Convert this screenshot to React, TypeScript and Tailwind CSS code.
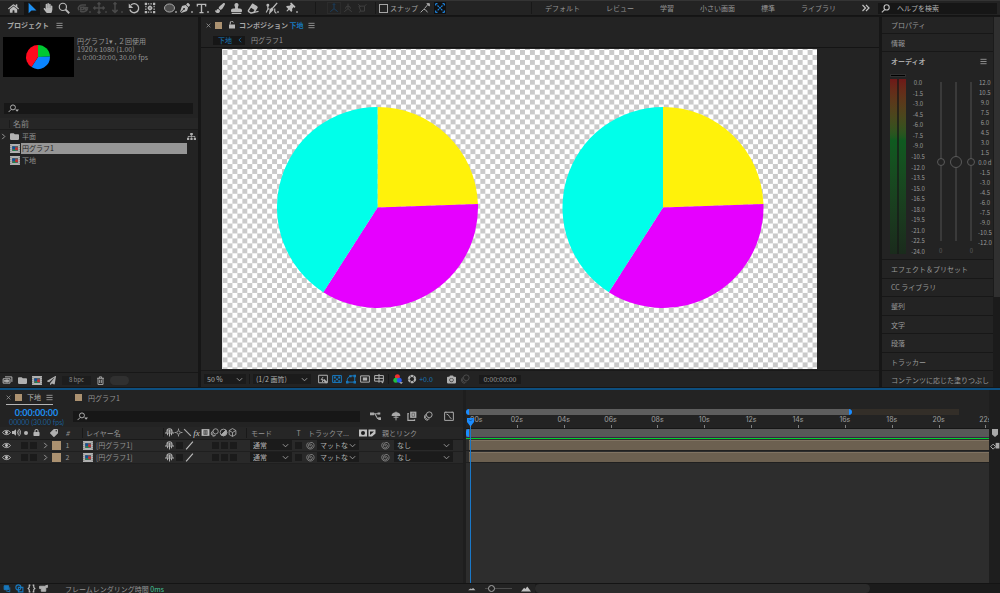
import React from "react";
import {
  FaHome, FaHandPaper, FaPenNib, FaPaintBrush, FaStamp, FaEraser, FaThumbtack,
  FaFolder, FaSitemap, FaLock, FaTag, FaCamera, FaVolumeUp, FaPaperPlane,
} from "react-icons/fa";

type SvgProps = { className?: string; children: React.ReactNode };

/* Stroked 16-unit icon */
function Glyph({ className = "size-3", children }: SvgProps) {
  return (
    <svg viewBox="0 0 16 16" className={`shrink-0 ${className}`} fill="none" stroke="currentColor" strokeWidth="1.6" aria-hidden="true">
      {children}
    </svg>
  );
}

const Chevron = () => (
  <Glyph className="size-[7px] pointer-events-none text-[#9a9a9a]"><path d="M2 5l6 6 6-6" strokeWidth="2.2" /></Glyph>
);
const ChevronRight = () => <Glyph className="size-[7px] text-[#a0a0a0]"><path d="M5 2l6 6-6 6" strokeWidth="2.2" /></Glyph>;
const MenuIcon = () => <Glyph className="size-[7px] text-[#9a9a9a]"><path d="M1 3h14M1 8h14M1 13h14" strokeWidth="2" /></Glyph>;
const CloseIcon = () => <Glyph className="size-[5px] text-[#9a9a9a]"><path d="M2 2l12 12M14 2L2 14" strokeWidth="2.4" /></Glyph>;
const SearchGlyph = () => (
  <Glyph className="size-[9px] text-[#c0c0c0]"><circle cx="10" cy="6" r="4.6" strokeWidth="2" /><path d="M7 9.5L1.5 15" strokeWidth="2" /></Glyph>
);
const SearchMenuGlyph = () => (
  <svg viewBox="0 0 20 16" className="h-[9px] w-[11px] shrink-0 text-[#b0b0b0]" fill="none" stroke="currentColor" strokeWidth="1.8" aria-hidden="true">
    <circle cx="9" cy="6" r="4.5" /><path d="M6 9.5L1 14.5" /><path d="M13 10h7l-3.5 4z" fill="currentColor" stroke="none" />
  </svg>
);
const CompIcon = ({ className = "h-[9px] w-[10px]" }: { className?: string }) => (
  <svg viewBox="0 0 20 18" className={`shrink-0 ${className}`} aria-hidden="true">
    <rect width="20" height="18" fill="#b0b0b0" />
    <path d="M1.500 2v14M18.500 2v14" stroke="#777" strokeWidth="1.500" strokeDasharray="2 2" />
    <rect x="4" y="4" width="12" height="10" fill="#596264" />
    <circle cx="7.500" cy="7.500" r="3" fill="#0f4f9c" /><rect x="10.500" y="7" width="5" height="5" fill="#c92b2b" /><path d="M5.500 14l3-5 3 5z" fill="#1c8a48" />
  </svg>
);
const EyeIcon = () => (
  <Glyph className="size-[9px] text-[#c4c4c4]"><path d="M1 8c3-5 11-5 14 0-3 5-11 5-14 0z" /><circle cx="8" cy="8" r="2.6" fill="currentColor" stroke="none" /></Glyph>
);
const ShyIcon = ({ className = "size-[9px]" }: { className?: string }) => (
  <Glyph className={`${className} text-[#b0b0b0]`}><path d="M3.500 8V5.500a4.500 4 0 0 1 9 0V8M4 5.500h8M8 3v12M0 9h16M4.500 9v4M11.500 9v4" strokeWidth="1.800" /></Glyph>
);
const SpiralIcon = () => (
  <Glyph className="size-[9px] text-[#8d8d8d]"><path d="M8.5 8.5a1.5 1.5 0 1 1 1-2.500 3.500 3.500 0 1 1-5 1.500 5 5 0 0 1 9-3c3 6-2 11-8 9.500A6.600 6.600 0 0 1 4 2.500" strokeWidth="1.400" /></Glyph>
);
const FrameBlend = () => (
  <Glyph className="size-[9px] text-[#b5b5b5]"><rect x="1" y="2" width="14" height="12" fill="currentColor" stroke="none" /><rect x="4.500" y="4" width="7" height="8" fill="#4a4a4a" stroke="none" /><path d="M6 6h4M6 8h4M6 10h4M2.800 3v10M13.200 3v10" stroke="#d0d0d0" strokeWidth="1" strokeDasharray="1.500 1" /></Glyph>
);
const MotionBlur = ({ className = "size-[9px]" }: { className?: string }) => (
  <Glyph className={`${className} text-[#a5a5a5]`}><circle cx="10" cy="6" r="4.600" /><path d="M5.500 4.500a4.600 4.600 0 0 0 5 8M3.500 7a4.600 4.600 0 0 0 4.500 7.500" /></Glyph>
);
const CubeIcon = ({ className = "size-[9px]" }: { className?: string }) => (
  <Glyph className={`${className} text-[#a5a5a5]`}><path d="M8 1l6 3.500v7L8 15l-6-3.500v-7zM2 4.500L8 8l6-3.500M8 8v7" /></Glyph>
);

const CUTS = [0, 88, 212.6, 360];
function Pie({ cx, cy, r, colors }: { cx: number; cy: number; r: number; colors: string[] }) {
  const at = (deg: number) => {
    const a = (deg * Math.PI) / 180;
    return `${(cx + r * Math.sin(a)).toFixed(2)} ${(cy - r * Math.cos(a)).toFixed(2)}`;
  };
  return (
    <g>
      {colors.map((c, i) => (
        <path key={c} fill={c} d={`M${cx} ${cy}L${at(CUTS[i])}A${r} ${r} 0 0 1 ${at(CUTS[i + 1])}Z`} />
      ))}
    </g>
  );
}

function Tool({ label, active, dim, children, menu }: { label: string; active?: boolean; dim?: boolean; menu?: boolean; children: React.ReactNode }) {
  return (
    <button
      type="button"
      aria-label={label}
      className={`relative flex h-[13px] w-4 items-center justify-center ${active ? "bg-[#141414] text-[#1d8ff2]" : dim ? "text-[#4a4a4a]" : "text-[#b9b9b9]"}`}
    >
      {children}
      {menu && <span className="absolute right-0 bottom-0.5 size-0.5 bg-current opacity-60" />}
    </button>
  );
}

const Divider = () => <span className="h-3 w-px shrink-0 bg-[#181818]" />;

function Toolbar() {
  return (
    <header className="flex h-4 shrink-0 items-center border-t border-b border-t-[#343434] border-b-[#141414] bg-[#232323]">
      <div className="flex w-[315px] shrink-0 items-center gap-[3px] pl-[5px]">
        <Tool label="ホーム"><FaHome className="size-[11px]" /></Tool>
        <div className="flex">
          <Tool label="選択ツール" active><Glyph><path d="M3.500 1v14l3.800-3.800H14z" fill="currentColor" stroke="none" /></Glyph></Tool>
          <Tool label="手のひらツール"><FaHandPaper className="size-2.5" /></Tool>
          <Tool label="ズームツール"><Glyph><circle cx="6.500" cy="6.500" r="4.800" /><path d="M10 10l5 5" strokeWidth="2.400" /></Glyph></Tool>
        </div>
        <div className="flex">
          <Tool label="周回ツール" dim menu><Glyph><path d="M3 11C0 8 3 4 7 4h5M4 12c4 2 9 1 10-3M13 12l-3-5 5 1M5 7h4v3H5z" strokeWidth="2" /></Glyph></Tool>
          <Tool label="パンツール" dim menu><Glyph><path d="M8 1v14M1 8h14M6 3l2-2 2 2M6 13l2 2 2-2M3 6L1 8l2 2M13 6l2 2-2 2" strokeWidth="1.800" /></Glyph></Tool>
          <Tool label="ドリーツール" dim menu><Glyph><path d="M8 1v13M4.500 10.500L8 14l3.500-3.500M6 3l2-2 2 2" strokeWidth="2" /></Glyph></Tool>
        </div>
        <div className="flex">
          <Tool label="回転ツール"><Glyph><path d="M4 4a6 6 0 1 1-1.500 6" strokeWidth="1.800" /><path d="M1 2v6h6z" fill="currentColor" stroke="none" /></Glyph></Tool>
          <Tool label="アンカーポイントツール"><Glyph><path d="M1 1h3v3H1zM12 1h3v3h-3zM1 12h3v3H1zM12 12h3v3h-3z" fill="currentColor" stroke="none" /><path d="M5 2.500h6M5 13.500h6M2.500 5v6M13.500 5v6" strokeDasharray="2 1.500" /><circle cx="8" cy="8" r="2.200" /><path d="M8 4.500v7M4.500 8h7" strokeWidth="1" /></Glyph></Tool>
        </div>
        <div className="flex">
          <Tool label="楕円形ツール" menu><Glyph className="h-2.5 w-[13px]"><ellipse cx="8" cy="8" rx="8" ry="6.500" fill="#4d4d4d" strokeWidth="1.400" /></Glyph></Tool>
          <Tool label="ペンツール" menu><FaPenNib className="size-2.5" /></Tool>
          <Tool label="文字ツール" menu><Glyph className="size-[11px]"><path d="M2 5V2h12v3M8 2v12M5 14h6" strokeWidth="2" /></Glyph></Tool>
        </div>
        <div className="flex">
          <Tool label="ブラシツール"><FaPaintBrush className="size-2.5" /></Tool>
          <Tool label="コピースタンプツール"><FaStamp className="size-[11px]" /></Tool>
          <Tool label="消しゴムツール"><FaEraser className="size-[11px] -rotate-12" /></Tool>
        </div>
        <Tool label="ロトブラシツール" menu><Glyph className="size-[13px]"><path d="M15 1L9 8M8 8l1.500 1.500L6 13l.5-3.500z" strokeWidth="1.600" fill="currentColor" /><circle cx="3.500" cy="4" r="1" fill="currentColor" /><path d="M3.500 5v4l-2 4M3.500 8l2 1M12 8v4l2 2" strokeWidth="1.400" /></Glyph></Tool>
        <Tool label="パペットピンツール" menu><FaThumbtack className="size-2.5 rotate-45" /></Tool>
      </div>
      <Divider />
      <div className="flex w-[59px] shrink-0 items-center justify-end pr-1.5 text-[#3f3f3f]">
        <button type="button" aria-label="ローカル軸モード" className="flex h-3 w-3.5 items-center justify-center border border-[#2b2b2b] text-[#1b3f60]"><Glyph className="size-2.5"><path d="M8 1v8M8 9l-6 5M8 9l6 5M6 3l2-2 2 2" /></Glyph></button>
        <button type="button" aria-label="ワールド軸モード" className="flex w-3.5 justify-center"><Glyph className="size-2.5"><path d="M8 1v8M8 9l-6 5M8 9l6 5M4 9a4 4 0 0 1 8 0" /></Glyph></button>
        <button type="button" aria-label="ビュー軸モード" className="flex w-3.5 justify-center"><Glyph className="size-2.5"><path d="M2 2l4 4M3 5h9v8H6zM12 5l3-3M6 13l-3 2" /></Glyph></button>
      </div>
      <Divider />
      <div className="flex shrink-0 items-center pl-[3px] text-[#a5a5a5]">
        <label className="flex items-center gap-0.5">
          <input type="checkbox" className="size-[9px] appearance-none border border-[#a5a5a5] bg-transparent" />
          スナップ
        </label>
        <button type="button" aria-label="スナップ延長" className="flex w-3.5 justify-center"><Glyph className="size-2.5"><path d="M1 15l5-5 3 1 3 4M7 9l6-7" /><path d="M11 1h4v4z" fill="currentColor" /></Glyph></button>
        <button type="button" aria-label="スナップ折りたたみ" className="ml-0.5 flex h-3 w-3 items-center justify-center bg-[#101010] text-[#1d7fd6]"><Glyph className="size-2.5"><path d="M1 1h4M1 1v4M15 1h-4M15 1v4M1 15h4M1 15v-4M15 15h-4M15 15v-4M4 4l8 8M12 4l-8 8" strokeWidth="2" strokeDasharray="3 1" /></Glyph></button>
      </div>
      <div className="flex-1" />
      <Divider />
      <nav className="flex shrink-0 items-center gap-[26px] pl-[13px] text-[#949494]">
        {["デフォルト", "レビュー", "学習", "小さい画面", "標準", "ライブラリ"].map((t) => <button key={t} type="button">{t}</button>)}
        <button type="button" aria-label="その他のワークスペース" className="mr-2 text-[#c0c0c0]"><Glyph className="size-2"><path d="M1 2l6 6-6 6M8 2l6 6-6 6" strokeWidth="2.400" /></Glyph></button>
      </nav>
      <label className="mr-[3px] flex h-[11px] w-[119px] shrink-0 items-center gap-[7px] bg-[#161616] pl-[3px]">
        <SearchGlyph />
        <input aria-label="ヘルプを検索" placeholder="ヘルプを検索" className="w-full min-w-0 bg-transparent outline-none placeholder:text-[#b0b0b0]" />
      </label>
    </header>
  );
}

function ProjectPanel() {
  return (
    <section className="flex w-[198px] shrink-0 flex-col bg-[#232323]">
      <h2 className="flex h-4 items-center gap-[7px] pl-[7px] font-bold text-[#a8a8a8]">プロジェクト <MenuIcon /></h2>
      <div className="flex gap-[3px] pt-1 pl-[3px] text-[#949494]">
        <svg viewBox="0 0 71 40" className="h-10 w-[71px] shrink-0 bg-black" aria-hidden="true">
          <Pie cx={35} cy={20} r={12} colors={["#00c832", "#0a84ff", "#ff0a1e"]} />
        </svg>
        <p className="whitespace-nowrap">円グラフ1▾ , ２回使用<br />1920 x 1080 (1.00)<br />▵ 0:00:30:00, 30.00 fps</p>
      </div>
      <label className="mt-[26px] mr-[5px] ml-1 flex h-[11px] items-center bg-[#171717] pl-1">
        <SearchMenuGlyph />
        <input aria-label="プロジェクトを検索" className="w-full min-w-0 bg-transparent outline-none" />
      </label>
      <div className="mt-1 flex h-3 items-center border-b border-[#1b1b1b] bg-[#262626] pl-[9px] text-[8px] text-[#8d8d8d]"><span className="border-l border-[#1b1b1b] pl-[3px]">名前</span></div>
      <ul className="flex-1 text-[#949494]">
        <li className="flex h-3 items-center">
          <span className="w-2.5"><ChevronRight /></span>
          <FaFolder className="h-[9px] w-[9px] text-[#b5b5b5]" /><span className="ml-[3px] flex-1">平面</span>
          <FaSitemap className="mr-0.5 size-[9px] text-[#b0b0b0]" />
        </li>
        <li className="flex h-3 items-center pl-2.5">
          <CompIcon /><span className="ml-px mr-[11px] flex h-[11px] flex-1 items-center bg-[#969696] pl-px text-[#1e1e1e]">円グラフ1</span>
        </li>
        <li className="flex h-3 items-center pl-2.5"><CompIcon /><span className="ml-0.5">下地</span></li>
      </ul>
      <div className="flex h-[15px] items-center gap-[5px] border-t border-[#171717] pl-[2px] text-[#b0b0b0]">
        <button type="button" aria-label="フッテージを変換"><Glyph className="h-2.5 w-[11px]"><path d="M4 3h11v8M1 6h11v7H1zM3 8v3M10 8v3" /><path d="M5 8h4v3H5z" fill="currentColor" /></Glyph></button>
        <button type="button" aria-label="新規フォルダー"><FaFolder className="size-[9px]" /></button>
        <button type="button" aria-label="新規コンポジション"><CompIcon /></button>
        <button type="button" aria-label="プロジェクト設定"><FaPaperPlane className="size-[9px]" /></button>
        <button type="button" className="ml-[1px] h-[9px] w-[29px] bg-[#1d1d1d] text-[6px] text-[#8d8d8d]">8 bpc</button>
        <button type="button" aria-label="削除"><Glyph className="size-[9px]"><path d="M2 4h12M6 4V1.500h4V4M3.500 4v11h9V4M6.500 6.500v6M9.500 6.500v6" /></Glyph></button>
        <span className="h-[9px] w-[19px] rounded-full bg-[#303030]" />
      </div>
    </section>
  );
}

function Select({ label, options, className }: { label: string; options: string[]; className: string }) {
  return (
    <span className={`flex items-center bg-[#1b1b1b] pr-[3px] ${className}`}>
      <select aria-label={label} className="h-full min-w-0 flex-1 appearance-none bg-transparent pl-[3px] leading-none text-[#b0b0b0] outline-none">
        {options.map((o) => <option key={o}>{o}</option>)}
      </select>
      <Chevron />
    </span>
  );
}

const Swatch = () => <span className="size-[7px] shrink-0 bg-[#ab9170]" />;

function CompositionPanel() {
  return (
    <section className="flex min-w-0 flex-1 flex-col bg-[#232323]">
      <div className="flex h-4 items-center pl-[5px]">
        <CloseIcon />
        <span className="ml-1 flex"><Swatch /></span>
        <Glyph className="ml-1.5 size-2 text-[#b8b8b8]"><path d="M2 7h12v8H2z" fill="currentColor" stroke="none" /><path d="M4.500 7V4a3 3 0 0 1 6-1" strokeWidth="2" /></Glyph>
        <h2 className="mr-1 ml-[3px] font-bold whitespace-nowrap text-[#a8a8a8]">コンポジション <span className="text-[#1878bd]">下地</span></h2>
        <MenuIcon />
      </div>
      <nav className="flex h-[15px] items-center border-b border-[#141414] pl-3">
        <button type="button" className="flex h-[9px] w-8 items-center justify-between bg-[#161616] pr-0.5 pl-[5px] text-[#1878bd]">下地 <Glyph className="size-1.5"><path d="M11 2L5 8l6 6" strokeWidth="2" /></Glyph></button>
        <button type="button" className="ml-1.5 text-[#949494]">円グラフ1</button>
      </nav>
      <div className="flex-1 pt-px pr-[62px] pl-[21px]">
        <svg viewBox="0 0 595 320" className="block w-full" role="img" aria-label="円グラフ">
          <defs>
            <pattern id="checker" width="9.917" height="9.917" patternUnits="userSpaceOnUse" patternTransform="translate(0.500 1)">
              <rect width="9.917" height="9.917" fill="#fff" />
              <path d="M0 0h4.958v4.958H0zM4.958 4.958h4.959v4.959H4.958z" fill="#cacaca" />
            </pattern>
          </defs>
          <rect width="595" height="320" fill="url(#checker)" />
          <Pie cx={155.5} cy={158.5} r={100.5} colors={["#fff20a", "#e600ff", "#00ffea"]} />
          <Pie cx={441} cy={158.5} r={100.5} colors={["#fff20a", "#e600ff", "#00ffea"]} />
        </svg>
      </div>
      <div className="mt-px flex h-[17px] items-center border-t border-[#191919] pl-[3px] text-[#b0b0b0]">
        <Select label="拡大率" options={["50 %"]} className="h-2.5 w-[42px]" />
        <span className="mx-[3px] h-2.5 w-px bg-[#181818]" />
        <Select label="解像度" options={["(1/2 画質)"]} className="h-2.5 w-[58px]" />
        <div className="flex items-center gap-1 pl-[7px]">
          <button type="button" aria-label="高速プレビュー"><Glyph className="size-2.5"><path d="M1 2h14v12H1zM8 5L5 9h3l-1 4" /><path d="M9 9l5 5" strokeWidth="3" /></Glyph></button>
          <button type="button" aria-label="透明グリッド" className="text-[#1878bd]"><Glyph className="size-2.5"><path d="M1 2.500h14v11H1z" /><path d="M3 4h3v3H3zM10 4h3v3h-3zM6.500 7h3v3h-3zM3 10h3v2.500H3zM10 10h3v2.500h-3z" fill="currentColor" stroke="none" /></Glyph></button>
          <button type="button" aria-label="マスクとシェイプのパス" className="text-[#1878bd]"><Glyph className="size-2.5"><path d="M2 13V9c1-4 4-6 6-6h6v10z" /><path d="M0 11h4v4H0zM12 11h4v4h-4zM12 1h4v4h-4zM5 2h4v3H5z" fill="currentColor" stroke="none" /></Glyph></button>
          <button type="button" aria-label="目標範囲"><Glyph className="size-2.5"><path d="M1 3h14v10H1z" /><path d="M4.500 5.500h7v5h-7z" fill="currentColor" stroke="none" /></Glyph></button>
          <button type="button" aria-label="グリッドとガイド"><Glyph className="size-2.5"><path d="M1 2.500h14v9H1zM8 0v14M1 7h14" /><path d="M11 12h5l-2.500 3z" fill="currentColor" stroke="none" /></Glyph></button>
        </div>
        <span className="mx-1 h-2.5 w-px bg-[#181818]" />
        <button type="button" aria-label="チャンネル"><svg viewBox="0 0 16 16" className="size-2.5" aria-hidden="true"><circle cx="7" cy="4.500" r="4" fill="#f03030" /><circle cx="4.500" cy="10" r="4" fill="#20c040" /><circle cx="10" cy="10" r="4" fill="#2a58e8" /><path d="M10 13h6l-3 3z" fill="#c0c0c0" /></svg></button>
        <button type="button" aria-label="露出をリセット" className="ml-1"><Glyph className="size-2.5"><circle cx="8" cy="8" r="5" strokeWidth="3.500" strokeDasharray="4.400 0.800" /></Glyph></button>
        <button type="button" className="w-[18px] text-[#1878bd]">+0.0</button>
        <button type="button" aria-label="スナップショット" className="ml-3"><FaCamera className="size-[9px]" /></button>
        <button type="button" aria-label="最後のスナップショット" className="ml-1 opacity-30"><MotionBlur className="size-2.5" /></button>
        <button type="button" className="ml-[9px] h-[9px] w-[42px] bg-[#1a1a1a] text-[#9a9a9a]">0:00:00:00</button>
      </div>
    </section>
  );
}

const LEFT_DB = ["0.0", "-1.5", "-3.0", "-4.5", "-6.0", "-7.5", "-9.0", "-10.5", "-12.0", "-13.5", "-15.0", "-16.5", "-18.0", "-19.5", "-21.0", "-22.5", "-24.0"];
const RIGHT_DB = ["12.0", "10.5", "9.0", "7.5", "6.0", "4.5", "3.0", "1.5", "0.0 d", "-1.5", "-3.0", "-4.5", "-6.0", "-7.5", "-9.0", "-10.5", "-12.0"];

function LevelSlider({ label, big }: { label: string; big?: boolean }) {
  const thumb = big
    ? "w-3 [&::-webkit-slider-thumb]:-ml-[5px] [&::-webkit-slider-thumb]:size-3"
    : "w-2 [&::-webkit-slider-thumb]:-ml-[3px] [&::-webkit-slider-thumb]:size-2";
  return (
    <input
      type="range"
      aria-label={label}
      defaultValue={50}
      className={`h-[159px] appearance-none bg-transparent [writing-mode:vertical-lr] [&::-webkit-slider-runnable-track]:mx-auto [&::-webkit-slider-runnable-track]:w-0.5 [&::-webkit-slider-runnable-track]:bg-[#3a3a3a] [&::-webkit-slider-thumb]:appearance-none [&::-webkit-slider-thumb]:rounded-full [&::-webkit-slider-thumb]:border [&::-webkit-slider-thumb]:border-[#5a5a5a] [&::-webkit-slider-thumb]:bg-[#232323] ${thumb}`}
    />
  );
}

const rowClass = "flex items-center border-b border-[#171717] pl-[9px]";

function SidePanels() {
  return (
    <aside className="flex w-[118px] shrink-0 bg-[#1b1b1b]">
      <div className="flex min-w-0 flex-1 flex-col overflow-hidden bg-[#232323] text-[#999999]">
        <h2 className={`${rowClass} h-[17px]`}>プロパティ</h2>
        <h2 className={`${rowClass} h-[18px]`}>情報</h2>
        <h2 className="flex h-[18px] items-center justify-between pr-[6px] pl-[9px] font-bold text-[#a8a8a8]">オーディオ <MenuIcon /></h2>
        <div className="flex h-[190px] items-start border-b border-[#171717] pt-1 pl-2">
          <div className="flex flex-col gap-0.5">
            <span className="h-[3px] w-4 border border-[#303030] bg-black" />
            <div className="flex h-[175px] w-4 justify-center bg-linear-to-b from-[#6e1818] via-[#0f5a20] via-35% to-[#1a2b1c]">
              <span className="w-0.5 bg-[#181818] opacity-70" />
            </div>
          </div>
          <ol className="mt-[5px] ml-[3px] flex h-[177px] w-[18px] flex-col items-center justify-between text-[6px] text-[#999999]">
            {LEFT_DB.map((d) => <li key={d}>{d}</li>)}
          </ol>
          <div className="ml-2.5 flex flex-col pt-2">
            <div className="flex gap-[5px]">
              <LevelSlider label="左レベル" /><LevelSlider label="レベル" big /><LevelSlider label="右レベル" />
            </div>
            <p className="flex justify-between px-0.5 pt-1.5 text-[6px] text-[#5c5c5c]"><span>0</span><span>0</span></p>
          </div>
          <ol className="mt-[5px] ml-[3px] flex h-[168px] flex-col items-center justify-between text-[6px] whitespace-nowrap text-[#999999]">
            {RIGHT_DB.map((d) => <li key={d}>{d}</li>)}
          </ol>
        </div>
        <div className="min-h-0 flex-1 basis-0 overflow-hidden">
          <ul className="flex h-[130px] flex-col">
            {["エフェクト＆プリセット", "CC ライブラリ", "整列", "文字", "段落", "トラッカー", "コンテンツに応じた塗りつぶし"].map((t) => (
              <li key={t} className={`${rowClass} flex-1 whitespace-nowrap`}>{t}</li>
            ))}
          </ul>
        </div>
      </div>
      <div className="ml-px w-1.5"><div className="h-[280px] bg-[#303030]" /></div>
    </aside>
  );
}

const Box = () => <span className="size-[7px] shrink-0 bg-[#1b1b1b]" />;

function LayerRow({ n }: { n: number }) {
  return (
    <tr className="h-3 border-b border-[#1f1f1f] bg-[#292929]">
      <td><span className="flex items-center pl-0.5"><EyeIcon /><span className="ml-2.5 flex gap-0.5"><Box /><Box /></span></span></td>
      <td><span className="flex items-center justify-end gap-[3px]"><ChevronRight /><span className="size-[9px] bg-[#ab9170]" /></span></td>
      <td className="text-center">{n}</td>
      <td><span className="flex items-center gap-[3px] pl-[9px] whitespace-nowrap"><CompIcon />[円グラフ1]</span></td>
      <td><span className="flex items-center gap-0.5 pl-0.5">
        <ShyIcon /><Box /><Glyph className="size-[9px] text-[#c0c0c0]"><path d="M2 15L14 1" strokeWidth="2" /></Glyph><span className="w-3.5" /><Box /><Box /><Box />
      </span></td>
      <td><Select label={`レイヤー${n}のモード`} options={["通常"]} className="ml-1 h-2.5 w-[42px]" /></td>
      <td><span className="flex justify-center"><Box /></span></td>
      <td><span className="flex items-center gap-0.5 pl-0.5"><SpiralIcon /><Select label={`レイヤー${n}のトラックマット`} options={["マットなし"]} className="h-2.5 w-[42px]" /></span></td>
      <td><span className="flex items-center gap-1 pl-0.5"><SpiralIcon /><Select label={`レイヤー${n}の親`} options={["なし"]} className="h-2.5 w-[59px]" /></span></td>
    </tr>
  );
}

function LayerPane() {
  return (
    <div className="flex w-[463px] shrink-0 flex-col bg-[#232323] text-[#949494]">
      <div className="flex h-[15px] items-stretch pl-1.5">
        <div className="flex w-[47px] items-center border-b border-[#b5b5b5]">
          <CloseIcon /><span className="ml-1 flex"><Swatch /></span><span className="mx-[5px] flex-1 whitespace-nowrap text-[#b5b5b5]">下地</span><MenuIcon />
        </div>
        <div className="ml-[22px] flex items-center gap-1.5"><Swatch />円グラフ1</div>
      </div>
      <div className="flex h-[22px] items-center">
        <div className="flex w-[73px] flex-col items-center whitespace-nowrap">
          <b className="font-['Lato','Noto_Sans_CJK_JP',sans-serif] text-[9px] leading-[11px] text-[#1d8ff2]">0:00:00:00</b>
          <span className="font-['Lato','Noto_Sans_CJK_JP',sans-serif] text-[#1a5f96]">00000 (30.00 fps)</span>
        </div>
        <label className="flex h-[11px] w-[287px] items-center bg-[#171717] pl-1">
          <SearchMenuGlyph />
          <input aria-label="レイヤーを検索" className="w-full min-w-0 bg-transparent outline-none" />
        </label>
        <div className="flex items-center pl-2.5 text-[#a8a8a8]">
          <button type="button" aria-label="ミニフローチャート"><Glyph className="size-[11px]"><path d="M1 4h5M6 4h5l3 0M7 4l4 7h3" /><path d="M0 2h6v4H0zM11 2h4v3h-4zM12 9h4v4h-4z" fill="currentColor" stroke="none" /></Glyph></button>
          <button type="button" aria-label="シャイレイヤーを隠す" className="ml-2.5"><Glyph className="size-2.5"><path d="M1 8a7 6 0 0 1 14 0z" fill="currentColor" stroke="none" /><path d="M8 1v14M4 10h8" /></Glyph></button>
          <button type="button" aria-label="フレームブレンド" className="ml-1.5"><Glyph className="size-2.5"><path d="M5 1h10v10H5z" fill="currentColor" stroke="none" /><path d="M3 4H1.500v11H12v-2" strokeWidth="2" /><path d="M8 3.500h4v5H8z" stroke="#555" strokeWidth="1" /></Glyph></button>
          <button type="button" aria-label="モーションブラー" className="ml-1.5"><MotionBlur className="size-2.5" /></button>
          <button type="button" aria-label="グラフエディター" className="ml-[11px]"><Glyph className="size-2.5"><path d="M1 2h14v13H1zM4 5c5 0 4 7 8 7M3 1v2M13 1v2" /></Glyph></button>
        </div>
      </div>
      <table className="w-full table-fixed border-collapse [&_td]:p-0 [&_th]:p-0 [&_th]:text-left [&_th]:font-normal">
        <colgroup>
          <col className="w-10" /><col className="w-[21px]" /><col className="w-[13px]" /><col className="w-[89px]" /><col className="w-[83px]" /><col className="w-[47px]" /><col className="w-[11px]" /><col className="w-[75px]" /><col />
        </colgroup>
        <thead>
          <tr className="h-3 border-b border-[#1a1a1a] bg-[#262626]">
            <th><span className="flex items-center gap-px pl-0.5"><EyeIcon /><FaVolumeUp className="size-[9px] text-[#b5b5b5]" /><span className="mx-0.5 size-1 rounded-full bg-[#b5b5b5]" /><FaLock className="ml-0.5 size-[7px] text-[#b5b5b5]" /></span></th>
            <th><FaTag className="ml-2.5 size-2 rotate-90 text-[#b0b0b0]" aria-label="ラベル" /></th>
            <th><span className="flex justify-center italic">#</span></th>
            <th><span className="ml-2 border-l border-[#191919] pl-[3px] whitespace-nowrap">レイヤー名</span></th>
            <th><span className="flex items-center border-l border-[#191919] pl-px text-[#a8a8a8]">
              <ShyIcon />
              <Glyph className="size-[9px]"><circle cx="8" cy="8" r="3" /><path d="M8 1v3M8 12v3M1 8h3M12 8h3" /></Glyph>
              <Glyph className="size-[9px]"><path d="M2 2l12 12" strokeWidth="2.200" /></Glyph>
              <i className="w-[9px] text-center font-['Liberation_Serif',serif] text-[9px] text-[#c8c8c8]">fx</i>
              <FrameBlend /><MotionBlur />
              <Glyph className="size-[9px]"><circle cx="8" cy="8" r="6" /><path d="M12.200 3.800A6 6 0 0 1 3.800 12.200z" fill="currentColor" /></Glyph>
              <CubeIcon />
            </span></th>
            <th><span className="border-l border-[#191919] pl-1">モード</span></th>
            <th><span className="flex justify-center">T</span></th>
            <th><span className="flex items-center pl-1"><span className="flex-1 whitespace-nowrap">トラックマ...</span>
              <Glyph className="size-2 text-[#c0c0c0]"><path d="M0 1h16v14H0z" fill="currentColor" stroke="none" /><circle cx="8" cy="8" r="4" fill="#1b1b1b" stroke="none" /></Glyph>
              <Glyph className="mr-[3px] ml-px size-2 text-[#c0c0c0]"><path d="M1 1h14v8l-7 6H1z" fill="currentColor" stroke="none" /><path d="M4 12V5h8z" fill="#1b1b1b" stroke="none" /></Glyph>
            </span></th>
            <th><span className="pl-[3px]">親とリンク</span></th>
          </tr>
        </thead>
        <tbody><LayerRow n={1} /><LayerRow n={2} /></tbody>
      </table>
    </div>
  );
}

const TICKS = ["00s", "02s", "04s", "06s", "08s", "10s", "12s", "14s", "16s", "18s", "20s", "22s"];

function TrackPane() {
  return (
    <div className="flex min-w-0 flex-1 bg-[#1e1e1e] pl-[3px]">
      <div className="relative flex min-w-0 flex-1 flex-col overflow-hidden bg-[#232323]">
        <div className="mt-[19px] flex h-1.5">
          <span className="w-[3px] rounded-l-full bg-[#1a8cff]" />
          <span className="w-[72.6%] bg-[#5e5e5e]" />
          <span className="w-[3px] rounded-r-full bg-[#1a8cff]" />
          <span className="mr-[30px] flex-1 bg-[#332e28]" />
        </div>
        <div className="flex h-[13px] pt-px pl-1">
          {TICKS.map((t, i) => (
            <span key={t} className="flex w-[9.03%] shrink-0 flex-col justify-between">
              <span className={`w-4 font-['Inter',sans-serif] text-[#a0a0a0] ${i === 0 ? "" : "-translate-x-1/2 text-center"}`}>{t}</span>
              <span className="h-[3px] w-px bg-[#808080]" />
            </span>
          ))}
        </div>
        <div className="flex h-[9px] border-t border-[#161616] bg-[#585858]"><span className="w-[3px] rounded-l bg-[#1a8cff]" /></div>
        <div className="h-0.5 border-t border-[#3b2440] bg-[#00d030]" />
        <div className="flex flex-1 flex-col bg-[#2d2d2d]">
          {[1, 2].map((n) => (
            <div key={n} className="h-3 border-b border-[#202020] pt-px pl-[3px]"><div className="h-2.5 border-t border-[#807362] bg-[#6c6050]" /></div>
          ))}
        </div>
        <div className="absolute top-7 bottom-0 left-px flex w-[7px] flex-col items-center">
          <svg viewBox="0 0 14 18" className="h-[9px] w-[9px] shrink-0" aria-hidden="true"><path d="M0 0h14v8l-7 9-7-9z" fill="#1a8cff" /><path d="M4 3l3 3 3-3" fill="none" stroke="#0b4f94" strokeWidth="2" /></svg>
          <span className="w-px flex-1 bg-[#1a78c8]" />
        </div>
      </div>
      <div className="flex w-[11px] flex-col items-center gap-1 pt-[39px] text-[#a8a8a8]">
        <Glyph className="size-2"><path d="M2 0h12v11l-6 5-6-5z" fill="currentColor" stroke="none" /></Glyph>
        <Glyph className="size-2.5"><path d="M1 9l4-4 4 4-4 4z" /><path d="M9 3h6v9H9z" fill="currentColor" stroke="none" /></Glyph>
      </div>
    </div>
  );
}

function StatusBar() {
  return (
    <footer className="flex h-2.5 shrink-0 items-center border-t border-[#141414] bg-[#232323] text-[#949494]">
      <div className="flex w-[467px] shrink-0 items-center gap-[3px] pl-[3px]">
        <button type="button" aria-label="レイヤースイッチ" className="text-[#1878bd]"><Glyph className="size-[9px]"><path d="M2 3h8v7H2z" fill="currentColor" /><path d="M5 12l7 2V6" /></Glyph></button>
        <button type="button" aria-label="転送制御" className="text-[#1878bd]"><Glyph className="size-[9px]"><circle cx="6" cy="6" r="4.500" strokeWidth="2" /><path d="M6 6h8v8H6z" strokeWidth="2" /></Glyph></button>
        <button type="button" aria-label="イン/アウト"><Glyph className="size-[9px] text-[#c0c0c0]"><path d="M6 2H4v4L2 8l2 2v4h2M10 2h2v4l2 2-2 2v4h-2" strokeWidth="2" /></Glyph></button>
        <button type="button" aria-label="レンダリング時間"><Glyph className="size-[9px] text-[#b0b0b0]"><path d="M1 4h9l5-2v4h-3v7H4V8H1z" fill="currentColor" /></Glyph></button>
        <span className="pl-3.5">フレームレンダリング時間 <span className="text-[#46c89a]">0ms</span></span>
      </div>
      <Glyph className="size-[9px] text-[#b0b0b0]"><path d="M2 11l4-3 2 1 3-2 4 4z" fill="currentColor" stroke="none" /></Glyph>
      <input type="range" aria-label="ズーム" defaultValue={15} className="mx-[9px] h-2 w-[27px] appearance-none bg-transparent [&::-webkit-slider-runnable-track]:h-px [&::-webkit-slider-runnable-track]:bg-[#4a4a4a] [&::-webkit-slider-thumb]:-mt-[3px] [&::-webkit-slider-thumb]:size-[7px] [&::-webkit-slider-thumb]:appearance-none [&::-webkit-slider-thumb]:rounded-full [&::-webkit-slider-thumb]:border [&::-webkit-slider-thumb]:border-[#a8a8a8] [&::-webkit-slider-thumb]:bg-[#232323]" />
      <Glyph className="size-2.5 text-[#c0c0c0]"><path d="M0 12l5-6 2 2 3-4 6 8z" fill="currentColor" stroke="none" /></Glyph>
      <div className="ml-1 flex-1 bg-[#1b1b1b]"><div className="h-[9px] w-[72%] rounded-full bg-[#2b2b2b]" /></div>
    </footer>
  );
}

export default function App() {
  return (
    <div className="flex min-h-screen flex-col bg-[#161616] font-['Noto_Sans_CJK_JP',sans-serif] text-[7px] leading-[8px]">
      <Toolbar />
      <main className="flex flex-1 flex-col">
        <div className="flex gap-[3px] pt-px">
          <ProjectPanel />
          <CompositionPanel />
          <SidePanels />
        </div>
        <section className="mt-px flex flex-1 border-t-2 border-[#0d4f80]">
          <LayerPane />
          <TrackPane />
        </section>
      </main>
      <StatusBar />
    </div>
  );
}
